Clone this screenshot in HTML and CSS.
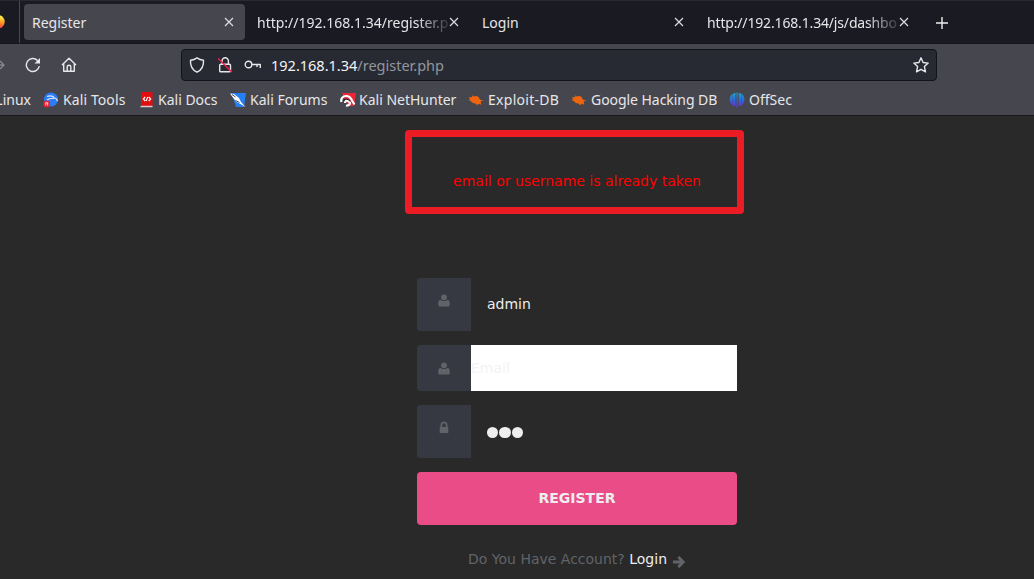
FILE: index.html
```html
<!DOCTYPE html>
<html lang="en">
<head>
<meta charset="utf-8">
<title>Register</title>
<link rel="stylesheet" href="styles.css">
</head>
<body>
<header class="browser">
  <div class="tabs">
    <div class="pinned">
      <svg width="6" height="16" viewBox="10 0 6 16"><defs><linearGradient id="fox" x2="0" y2="1"><stop offset=".1" stop-color="#fff04a"/><stop offset=".55" stop-color="#ff9a20"/><stop offset="1" stop-color="#f52c55"/></linearGradient></defs><path d="M7 1c4-1 8 3 7.700 7-.3 3.500-3 6.500-7.700 7z" fill="url(#fox)"/></svg>
    </div>
    <div class="tab active"><span class="title">Register</span><svg class="close" viewBox="0 0 10 10"><path d="M1 1l8 8M9 1L1 9"/></svg></div>
    <div class="tab"><span class="title fade">http://192.168.1.34/register.p</span><svg class="close" viewBox="0 0 10 10"><path d="M1 1l8 8M9 1L1 9"/></svg></div>
    <div class="tab"><span class="title">Login</span><svg class="close" viewBox="0 0 10 10"><path d="M1 1l8 8M9 1L1 9"/></svg></div>
    <div class="tab"><span class="title fade tight">http://192.168.1.34/js/dashbo</span><svg class="close" viewBox="0 0 10 10"><path d="M1 1l8 8M9 1L1 9"/></svg></div>
    <svg class="plus" width="12" height="12" viewBox="0 0 12 12"><path d="M6 0v12M0 6h12"/></svg>
  </div>
  <div class="nav">
    <svg class="forward line" width="5" height="12" viewBox="0 0 5 12"><path d="M0 6h4M0 2l4 4-4 4"/></svg>
    <svg class="reload line" width="16" height="16" viewBox="0 0 16 16"><path d="M14.300 9A6.500 6.500 0 1 1 12.500 3.400L14 5"/><path d="M15 1v5.500H9.500z" class="tip"/></svg>
    <svg class="home line" width="16" height="16" viewBox="0 0 16 16"><path d="M1 8l7-6.800L15 8M2.700 6.800V14.300h10.600V6.800M6.200 14V9.800c0-1 .6-1.500 1.800-1.500s1.800.5 1.800 1.500V14"/></svg>
    <div class="address">
      <svg class="line" width="16" height="16" viewBox="0 0 16 16"><path d="M8 .9c2 1.500 4 2.100 6.500 2.300C14.900 9 12.500 13 8 15.200 3.500 13 1.100 9 1.500 3.200 4 3 6 2.400 8 .9z"/></svg>
      <svg class="line lock" width="16" height="16" viewBox="0 0 16 16"><path d="M5 7V3.900a3.200 3.200 0 0 1 6.400 0V7M3.700 7.200h8.800c.7 0 1 .4 1 1v5.600c0 .6-.3 1-1 1H3.700c-.7 0-1-.4-1-1V8.200c0-.6.3-1 1-1z"/><path class="slash" d="M1.200 1.500l13.800 13.800"/></svg>
      <svg class="line key" width="17" height="10" viewBox="0 0 17 10"><circle cx="4.500" cy="4.500" r="3.300"/><path d="M8 4.500h8.300V8M13 4.500V7"/></svg>
      <span class="url">192.168.1.34<span>/register.php</span></span>
      <svg class="line star" width="16" height="16" viewBox="0 0 16 16"><path d="M8 .8l2.100 4.700 5.100.6-3.800 3.500 1.100 5.200L8 12.300l-4.500 2.500 1.100-5.200L.8 6.100l5.100-.6z"/></svg>
    </div>
  </div>
  <div class="bookmarks">
    <span class="mark"><span>Linux</span></span>
    <span class="mark tools"><svg viewBox="0 0 16 16"><circle cx="8" cy="7.500" r="7" fill="#2c7df5"/><path d="M4 4.500c3-1 6-.5 7.500 1.500 1.500.3 2.500 1.300 3 3M4 8c2.500-2 4.500-1.800 7-1.700" stroke="#dfe9ff" fill="none" stroke-width="1.200"/><circle cx="3.700" cy="12" r="3.400" fill="#ed1c2e"/><path d="M2.300 10.800h2.900M2.800 11v2.500M4.700 11v2.500" stroke="#fff" stroke-width=".8"/></svg>Kali Tools</span>
    <span class="mark docs"><svg viewBox="0 0 16 16"><path d="M2 0h11.500v14H2z" fill="#e30d10"/><path d="M1 15.300h12.500v-1.500H2z" fill="#d5c9ca"/><path d="M6.200 5L4.300 7l2 2M9.700 5l2 2-2 2M8.700 5L7.200 9" stroke="#fff" stroke-width="1.100" fill="none"/></svg>Kali Docs</span>
    <span class="mark"><svg viewBox="0 0 16 16"><path d="M1.500 1H16l-2 14H6z" fill="#267ff5"/><path d="M0 1.500l4 .5 5 4 2 4 4.500 5-5-3-4-2-4-5z" fill="#fff"/><path d="M2 2.500l3.500 2.500M5.500 8.500l4 2" stroke="#29333f" stroke-width=".9"/></svg>Kali Forums</span>
    <span class="mark hunter"><svg viewBox="0 0 16 16"><path d="M2 1h14l-2 13H8z" fill="#ed2635"/><path d="M1.500 10c-1-3 1-6 4.500-6 3 0 5 2 6 4.500l2.500 4M5 11c0-3 3-3 4.500-1 1 1.500-.2 4-3.500 3.500" stroke="#fff" stroke-width="2.200" fill="none"/><path d="M3.500 9.500c1-3 4.500-3.200 7 0" stroke="#2f2b32" stroke-width="1.200" fill="none"/></svg>Kali NetHunter</span>
    <span class="mark exploit"><svg viewBox="0 0 16 16"><path class="bug" d="M1 5l3 .2.3-2 1.500 1.200C9 3 11 4.500 12 7.800l3.500.7-2.800.8.5 3.500-2.500-1-1.500 1.500-1.700-1.700C5 11.500 3 10 2.200 8.500L.5 8.200l1.500-1.200z"/></svg>Exploit-DB</span>
    <span class="mark hacking"><svg viewBox="0 0 16 16"><path class="bug" d="M1 5l3 .2.3-2 1.500 1.200C9 3 11 4.500 12 7.800l3.500.7-2.800.8.5 3.500-2.500-1-1.500 1.500-1.700-1.700C5 11.500 3 10 2.200 8.500L.5 8.200l1.500-1.200z"/></svg>Google Hacking DB</span>
    <span class="mark"><svg viewBox="0 0 16 16"><defs><linearGradient id="os" gradientUnits="userSpaceOnUse" x1="0" y1="0" x2="0" y2="16"><stop stop-color="#12afd1"/><stop offset=".5" stop-color="#2d69d7"/><stop offset="1" stop-color="#7526ee"/></linearGradient></defs><path d="M3.400 2v11C-.4 10.500-.2 4.500 3.400 2zM3.700 1.700l2.800-1v13.600l-2.800-1zM7.500.5h1.200v15.300H7.500zM9.700.7l2.800 1v11.600l-2.800 1zM12.800 2c3.500 2.500 3.600 8.500 0 11z" fill="url(#os)"/></svg>OffSec</span>
  </div>
</header>
<main class="page">
  <div class="notice">email or username is already taken</div>
  <form class="form">
    <div class="field"><label class="icon raised"><svg width="12" height="13" viewBox="0 0 12 13"><circle cx="6" cy="3.300" r="2.900"/><path d="M2.500 5.800C3.500 7.400 8.500 7.400 9.500 5.800 11.300 6.300 12 8 11.700 11c0 1-.7 1.600-1.700 1.600H2C1 12.600.3 12 .3 11 0 8 .7 6.300 2.500 5.800z"/></svg></label><span class="value">admin</span></div>
    <div class="field short"><label class="icon"><svg width="12" height="13" viewBox="0 0 12 13"><circle cx="6" cy="3.300" r="2.900"/><path d="M2.500 5.800C3.500 7.400 8.500 7.400 9.500 5.800 11.300 6.300 12 8 11.700 11c0 1-.7 1.600-1.700 1.600H2C1 12.600.3 12 .3 11 0 8 .7 6.300 2.500 5.800z"/></svg></label><span class="email">Email</span></div>
    <div class="field"><label class="icon raised"><svg width="10" height="13" viewBox="0 0 10 13"><path fill-rule="evenodd" d="M1.500 6V4a3.500 3.500 0 0 1 7 0v2h.8v6H.7V6zM3.200 6h3.600V4a1.800 1.800 0 0 0-3.600 0z"/></svg></label><span class="value dots"><i></i><i></i><i></i></span></div>
    <button class="submit" type="button">REGISTER</button>
  </form>
  <p class="account">Do You Have Account? <a>Login</a><svg width="12" height="12" viewBox="0 0 12 12"><path d="M0 6h10M5.300 1l5 5-5 5" fill="none" stroke="#606468" stroke-width="2.900"/></svg></p>
</main>
</body>
</html>
```
FILE: styles.css
```css
* { box-sizing: border-box; }
body { margin: 0; width: 1034px; height: 579px; overflow: hidden; background: #292929; }
svg { display: block; flex: none; }
.browser { height: 116px; background: #46464e; border-bottom: 1px solid #17171b; color: #e6e6e9; font: 14px/20px "Noto Sans", sans-serif; white-space: nowrap; }
.tabs { display: flex; height: 44px; background: #1a1a22; border-top: 1px solid #292a34; border-bottom: 1px solid #15151a; }
.pinned { display: flex; align-items: center; width: 20px; border-right: 1px solid #4a4a51; margin-right: 4px; }
.tab { display: flex; align-items: center; justify-content: space-between; width: 221px; height: 36px; margin: 3px 4px 0 0; padding: 0 11px 0 8px; border-radius: 4px; }
.active { background: #46464f; }
.title { width: 191px; padding-top: 2px; }
.fade { mask-image: linear-gradient(90deg, #000 160px, transparent 196px); }
.tight { letter-spacing: -.16px; }
.close { width: 10px; height: 10px; fill: none; stroke: #dedee2; stroke-width: 1.15; }
.plus { margin: 16px 0 0 12px; stroke: #efeff1; stroke-width: 1.4; }
.nav { display: flex; align-items: center; height: 41px; padding-top: 1px; }
.line { fill: none; stroke: #e7e7ea; stroke-width: 1.4; stroke-linejoin: round; }
.tip { fill: #e7e7ea; stroke: none; }
.forward { margin-right: 20px; stroke: #85858c; }
.home { margin-left: 20px; }
.address { display: flex; align-items: center; width: 756px; height: 32px; margin-left: 104px; padding: 0 7px; background: #282a33; border: 1px solid #11131a; border-radius: 4px; }
.lock { margin-left: 12px; }
.slash { stroke: #f51b48; }
.key { margin: 0 10px 0 11px; }
.url { color: #f4f4f6; font-size: 14.5px; }
.url span { color: #94959c; }
.star { margin-left: auto; }
.bookmarks { display: grid; grid-template-columns: 43px 96px 91px 110px 128px 103px 158px 80px; height: 30px; align-items: center; }
.mark { display: flex; align-items: center; gap: 4px; min-width: 0; }
.mark svg { width: 16px; height: 16px; }
.mark:first-child { width: 31px; justify-content: flex-end; }
.tools { letter-spacing: .1px; }
.docs, .hunter { gap: 3px; }
.exploit { letter-spacing: .28px; }
.hacking { letter-spacing: -.05px; }
.bug { fill: #ed6510; }
.page { display: flex; flex-direction: column; height: 463px; padding: 14px 0 0 404px; font: 14px/21px "DejaVu Sans", sans-serif; }
.notice { width: 339px; height: 84px; margin-left: 1px; border: 7px solid #ed1c24; border-radius: 4px; padding: 34px 0 0 5px; text-align: center; color: #f00; white-space: nowrap; }
.form { display: flex; flex-direction: column; gap: 14px; width: 320px; margin: 64px 0 0 13px; }
.field { display: flex; height: 53px; }
.short { height: 46px; }
.icon { display: flex; align-items: center; justify-content: center; width: 54px; background: #363942; border-radius: 3px 0 0 3px; }
.icon svg { fill: #606468; }
.raised { padding-bottom: 8px; }
.value { display: flex; align-items: center; padding-left: 16px; color: #eee; }
.dots { gap: 1px; padding: 2px 0 0 16px; }
.dots i { width: 11.300px; height: 11.300px; border-radius: 50%; background: #eee; }
.email { flex: 1; background: #fff; color: #f3f3f3; line-height: 47px; }
.submit { height: 53px; padding: 0 0 2px; border: 0; border-radius: 4px; background: #ea4c88; color: #eee; font: bold 14px "DejaVu Sans", sans-serif; }
.account { display: flex; align-items: center; margin: 24px 0 0 64px; color: #606468; white-space: pre; }
.account a { color: #eee; }
.account svg { margin: 4px 0 0 6px; }
```
